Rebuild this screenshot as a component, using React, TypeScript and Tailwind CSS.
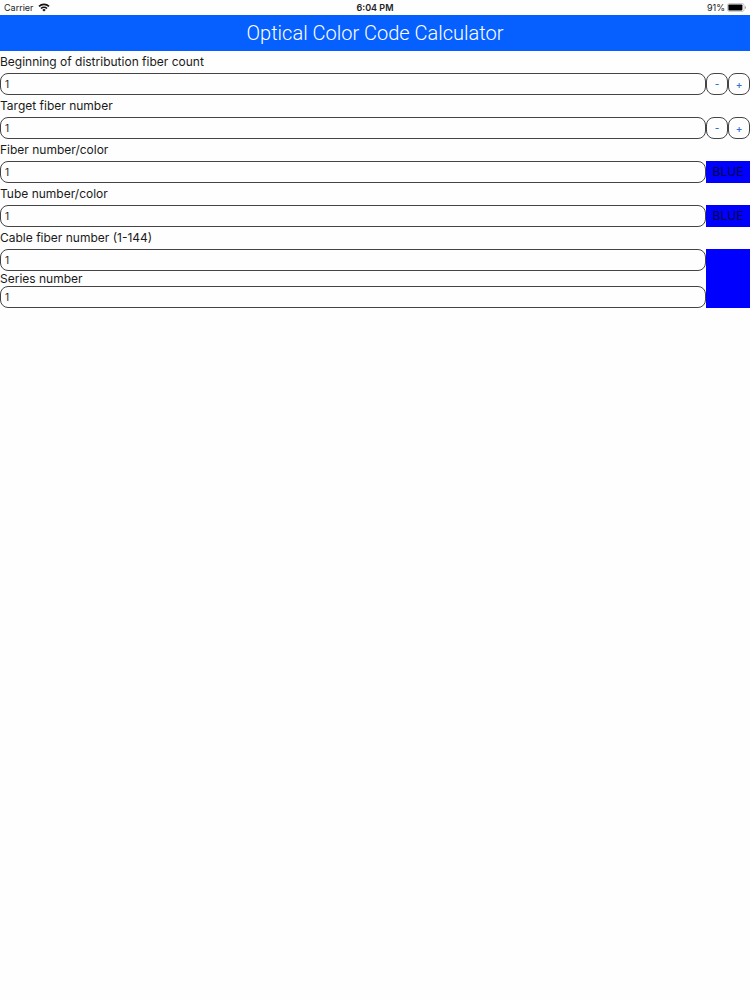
import { useState } from 'react';

const COLORS = [
  { name: 'BLUE', bg: 'bg-[#0000ff]' },
  { name: 'ORANGE', bg: 'bg-[#ffa500]' },
  { name: 'GREEN', bg: 'bg-[#008000]' },
  { name: 'BROWN', bg: 'bg-[#a52a2a]' },
  { name: 'SLATE', bg: 'bg-[#708090]' },
  { name: 'WHITE', bg: 'bg-[#ffffff]' },
  { name: 'RED', bg: 'bg-[#ff0000]' },
  { name: 'BLACK', bg: 'bg-[#000000]' },
  { name: 'YELLOW', bg: 'bg-[#ffff00]' },
  { name: 'VIOLET', bg: 'bg-[#ee82ee]' },
  { name: 'ROSE', bg: 'bg-[#ff66cc]' },
  { name: 'AQUA', bg: 'bg-[#00ffff]' },
];

const labelClass = 'block h-[22px] text-[12px] leading-[22px]';
const inputClass =
  'block h-[22px] w-full min-w-0 flex-1 rounded-lg border border-[#444444] bg-transparent px-1 text-[10px] outline-none';

function StatusBar() {
  return (
    <div className="grid h-[15px] grid-cols-3 items-center px-1 text-[9px] leading-[15px] text-[#222222]">
      <div className="flex items-center gap-1">
        <span>Carrier</span>
        <svg width="12" height="9" viewBox="0 0 12 9" fill="none" stroke="#111111" strokeWidth="1.6">
          <path d="M1 3.4a7.2 7.2 0 0 1 10 0" />
          <path d="M3 5.5a4.3 4.3 0 0 1 6 0" />
          <path d="M6 8.6 4.3 6.9a2.4 2.4 0 0 1 3.4 0z" fill="#111111" stroke="none" />
        </svg>
      </div>
      <span className="text-center font-semibold">6:04 PM</span>
      <div className="flex items-center justify-end gap-[2px]">
        <span>91%</span>
        <svg width="19" height="9" viewBox="0 0 19 9">
          <rect x="0.5" y="0.5" width="16.5" height="8" rx="1.8" fill="none" stroke="#aaaaaa" strokeWidth="0.6" />
          <rect x="1.4" y="1.4" width="14" height="6.2" rx="0.8" fill="#000000" />
          <path d="M17.800 3v3c.8-.3 1.100-.8 1.100-1.500S18.600 3.300 17.800 3z" fill="#999999" />
        </svg>
      </div>
    </div>
  );
}

interface StepperProps {
  id: string;
  label: string;
  value: number;
  onChange: (value: number) => void;
}

function StepperRow({ id, label, value, onChange }: StepperProps) {
  const set = (n: number) => onChange(Math.max(1, n || 1));
  const buttonClass =
    'h-[22px] w-[22px] rounded-lg border border-[#444444] text-[10px] font-medium leading-5 text-[#2f6fd6]';

  return (
    <div>
      <label htmlFor={id} className={labelClass}>{label}</label>
      <div className="flex">
        <input
          id={id}
          inputMode="numeric"
          className={inputClass}
          value={value}
          onChange={(e) => set(parseInt(e.target.value, 10))}
        />
        <button type="button" aria-label={`Decrease ${label}`} className={buttonClass} onClick={() => set(value - 1)}>
          -
        </button>
        <button type="button" aria-label={`Increase ${label}`} className={buttonClass} onClick={() => set(value + 1)}>
          +
        </button>
      </div>
    </div>
  );
}

interface ColorRowProps {
  id: string;
  label: string;
  value: number;
}

function ColorRow({ id, label, value }: ColorRowProps) {
  const color = COLORS[value - 1];

  return (
    <div>
      <label htmlFor={id} className={labelClass}>{label}</label>
      <div className="flex">
        <input id={id} readOnly className={inputClass} value={value} />
        <div className={`w-11 text-center text-[12px] leading-[22px] text-[#00003c] ${color.bg}`}>
          {color.name}
        </div>
      </div>
    </div>
  );
}

export default function App() {
  const [start, setStart] = useState(1);
  const [target, setTarget] = useState(1);

  const offset = Math.max(0, target - start);
  const fiber = (offset % 12) + 1;
  const tube = (Math.floor(offset / 12) % 12) + 1;
  const cable = (offset % 144) + 1;
  const series = Math.floor(offset / 144) + 1;

  return (
    <div className="min-h-screen bg-[#fefefe] font-['Inter',sans-serif] text-[#1a1a1a]">
      <StatusBar />
      <header className="bg-[#0560ff]">
        <h1 className="text-center font-['Roboto',sans-serif] text-[20px] font-light leading-9 text-white">
          Optical Color Code Calculator
        </h1>
      </header>
      <main>
        <StepperRow id="start" label="Beginning of distribution fiber count" value={start} onChange={setStart} />
        <StepperRow id="target" label="Target fiber number" value={target} onChange={setTarget} />
        <ColorRow id="fiber" label="Fiber number/color" value={fiber} />
        <ColorRow id="tube" label="Tube number/color" value={tube} />
        <label htmlFor="cable" className={labelClass}>Cable fiber number (1-144)</label>
        <div className="flex">
          <div className="min-w-0 flex-1">
            <input id="cable" readOnly className={inputClass} value={cable} />
            <label htmlFor="series" className="block text-[12px] leading-[15px]">Series number</label>
            <input id="series" readOnly className={inputClass} value={series} />
          </div>
          <div className={`w-11 ${COLORS[(series - 1) % 12].bg}`} />
        </div>
      </main>
    </div>
  );
}
